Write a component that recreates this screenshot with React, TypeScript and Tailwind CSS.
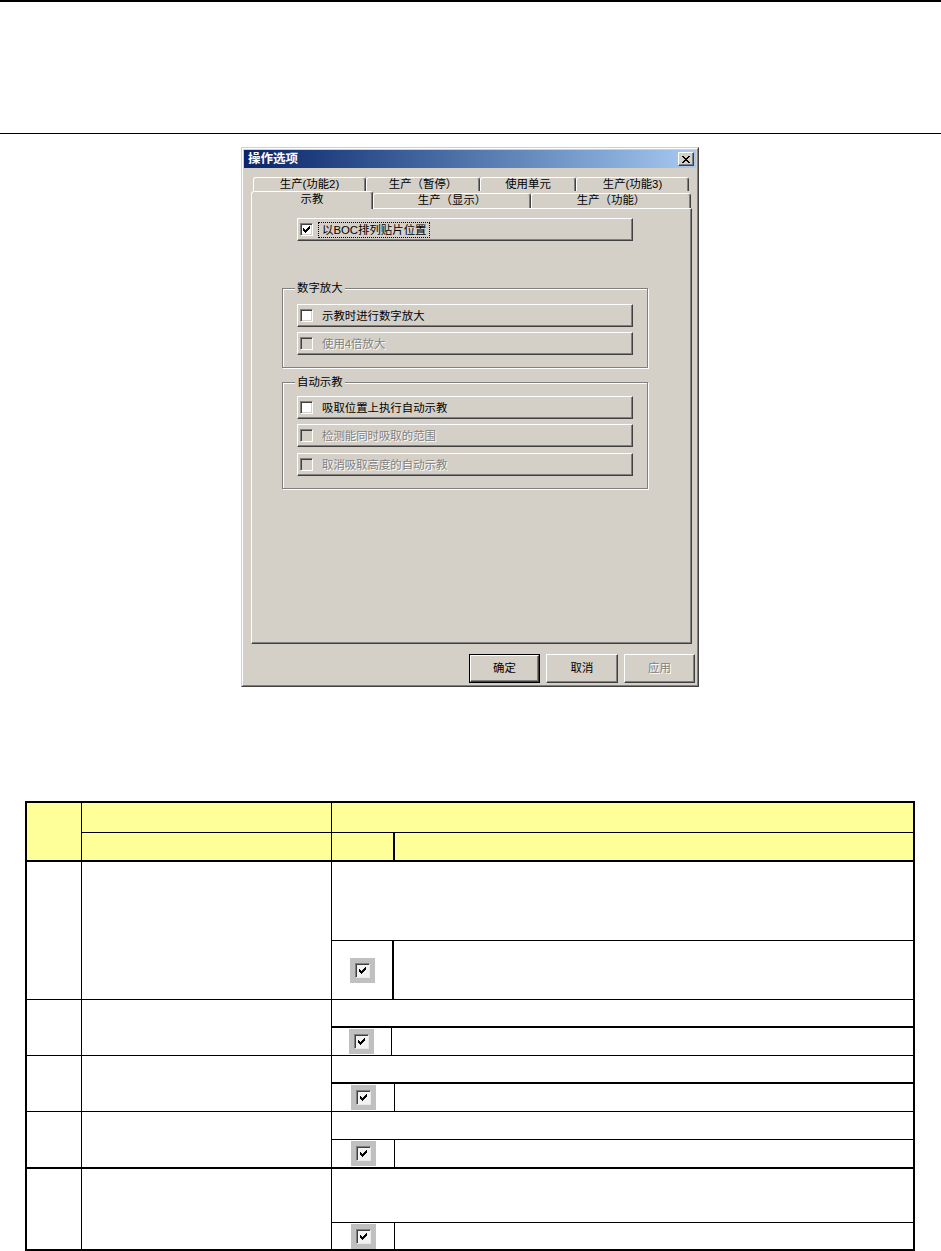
const FONT = "font-['Liberation_Sans','Noto_Sans_CJK_SC',sans-serif]";

const raised =
  "border border-t-white border-l-white border-r-[#404040] border-b-[#404040] shadow-[inset_-1px_-1px_0_#808080]";

function CheckMark() {
  const cols = [
    [0, 2],
    [1, 3],
    [2, 4],
    [3, 3],
    [4, 2],
    [5, 1],
    [6, 0],
  ];
  return (
    <svg width={7} height={7} viewBox="0 0 7 7" shapeRendering="crispEdges">
      {cols.map(([x, y]) => (
        <rect key={x} x={x} y={y} width={1} height={3} fill="#000" />
      ))}
    </svg>
  );
}

function CloseGlyph() {
  const rows = ["11000011", "01100110", "00111100", "00011000", "00111100", "01100110", "11000011"];
  return (
    <svg width={8} height={7} viewBox="0 0 8 7" shapeRendering="crispEdges">
      {rows.map((r, y) =>
        r.split("").map((c, x) => (c === "1" ? <rect key={`${x}-${y}`} x={x} y={y} width={1} height={1} fill="#000" /> : null))
      )}
    </svg>
  );
}

function CheckBox({ checked, disabled }: { checked?: boolean; disabled?: boolean }) {
  return (
    <span
      className={`flex h-[13px] w-[13px] shrink-0 items-center justify-center border border-t-[#808080] border-l-[#808080] border-r-white border-b-white shadow-[inset_1px_1px_0_#404040,inset_-1px_-1px_0_#d4d0c8] ${
        disabled ? "bg-[#d4d0c8]" : "bg-white"
      }`}
    >
      {checked && <CheckMark />}
    </span>
  );
}

function OptionRow({
  label,
  checked,
  disabled,
  focus,
  className,
}: {
  label: string;
  checked?: boolean;
  disabled?: boolean;
  focus?: boolean;
  className: string;
}) {
  return (
    <div className={`flex h-[23px] w-[336px] items-center bg-[#d4d0c8] pl-[2px] ${raised} ${className}`}>
      <CheckBox checked={checked} disabled={disabled} />
      {focus ? (
        <span className="ml-[5px] border border-dotted border-black px-[3px] text-[11.4px] leading-[14px] text-black">{label}</span>
      ) : (
        <span
          className={`ml-[9px] text-[11.4px] leading-[14px] ${
            disabled ? "text-[#808080] [text-shadow:1px_1px_0_#fff]" : "text-black"
          }`}
        >
          {label}
        </span>
      )}
    </div>
  );
}

function GroupBox({ title, className, children }: { title: string; className: string; children: React.ReactNode }) {
  return (
    <div
      className={`relative ml-[30px] w-[366px] border border-[#808080] shadow-[inset_1px_1px_0_#fff,1px_1px_0_#fff] ${className}`}
    >
      <span className="absolute -top-[8px] left-[12px] bg-[#d4d0c8] px-[2px] text-[11.4px] leading-[14px] text-black">{title}</span>
      <div className="flex flex-col pl-[14px]">{children}</div>
    </div>
  );
}

const tabBase =
  "flex items-center justify-center rounded-t-[3px] border-t border-l border-r border-t-white border-l-white border-r-[#404040] shadow-[inset_-1px_0_0_#808080] bg-[#d4d0c8] text-[11.4px] leading-none text-black";

function DialogButton({ label, isDefault, disabled, width }: { label: string; isDefault?: boolean; disabled?: boolean; width: string }) {
  const text = (
    <span className={`text-[11.4px] leading-none ${disabled ? "text-[#808080] [text-shadow:1px_1px_0_#fff]" : "text-black"}`}>{label}</span>
  );
  if (isDefault) {
    return (
      <div className={`flex h-[29px] border border-black ${width}`}>
        <div className={`flex flex-1 items-center justify-center ${raised}`}>{text}</div>
      </div>
    );
  }
  return <div className={`flex h-[29px] items-center justify-center ${raised} ${width}`}>{text}</div>;
}

function Dialog() {
  return (
    <div className="ml-[241px] mt-[13px] flex h-[540px] w-[458px] flex-col border border-t-[#d4d0c8] border-l-[#d4d0c8] border-r-[#404040] border-b-[#404040] bg-[#d4d0c8]">
      <div className="flex flex-1 flex-col border border-t-white border-l-white border-r-[#808080] border-b-[#808080] p-px">
        <div className="flex h-[18px] items-center justify-between bg-linear-to-r from-[#0a246a] to-[#a6caf0] pl-[4px] pr-[2px]">
          <span className="text-[12.5px] font-bold leading-none text-white">操作选项</span>
          <div className={`flex h-[14px] w-[16px] items-center justify-center bg-[#d4d0c8] ${raised}`}>
            <CloseGlyph />
          </div>
        </div>

        <div className="ml-[7px] mt-[9px] flex w-[441px] flex-col">
          <div className="ml-[2px] flex h-[14px]">
            <div className={`${tabBase} w-[113px]`}>生产(功能2)</div>
            <div className={`${tabBase} w-[114px]`}>生产（暂停）</div>
            <div className={`${tabBase} w-[96px]`}>使用单元</div>
            <div className={`${tabBase} w-[113px]`}>生产(功能3)</div>
          </div>
          <div className="flex h-[17px] items-end">
            <div className={`${tabBase} relative z-10 -mb-px h-[18px] w-[122px] items-start pt-[2px]`}>示教</div>
            <div className={`${tabBase} h-[15px] w-[158px]`}>生产（显示）</div>
            <div className={`${tabBase} h-[15px] w-[160px]`}>生产（功能）</div>
          </div>
          <div className="flex h-[436px] flex-col border border-t-white border-l-white border-r-[#404040] border-b-[#404040] shadow-[inset_-1px_-1px_0_#808080]">
            <OptionRow label="以BOC排列贴片位置" checked focus className="ml-[45px] mt-[9px]" />

            <GroupBox title="数字放大" className="mt-[47px] h-[80px]">
              <OptionRow label="示教时进行数字放大" className="mt-[15px]" />
              <OptionRow label="使用4倍放大" disabled className="mt-[5px]" />
            </GroupBox>

            <GroupBox title="自动示教" className="mt-[14px] h-[107px]">
              <OptionRow label="吸取位置上执行自动示教" className="mt-[13px]" />
              <OptionRow label="检测能同时吸取的范围" disabled className="mt-[5px]" />
              <OptionRow label="取消吸取高度的自动示教" disabled className="mt-[6px]" />
            </GroupBox>
          </div>
        </div>

        <div className="mt-[10px] flex justify-end gap-[6px] pr-px">
          <DialogButton label="确定" isDefault width="w-[71px]" />
          <DialogButton label="取消" width="w-[72px]" />
          <DialogButton label="应用" disabled width="w-[71px]" />
        </div>
      </div>
    </div>
  );
}

function TickIcon() {
  return (
    <div className="flex h-[25px] w-[25px] items-center justify-center bg-[#c0c0c0]">
      <span className="flex h-[15px] w-[15px] items-center justify-center border border-t-[#808080] border-l-[#808080] border-r-[#e8e8e8] border-b-[#e8e8e8] bg-[#f2f2f2] shadow-[inset_1px_1px_0_#404040]">
        <CheckMark />
      </span>
    </div>
  );
}

const rows = [
  { row: "h-[138px] border-b", upper: "h-[79px] border-b", icon: "w-[62px] border-r-2" },
  { row: "h-[56px] border-b", upper: "h-[28px] border-b-2", icon: "w-[60px] border-r" },
  { row: "h-[56px] border-b", upper: "h-[28px] border-b-2", icon: "w-[63px] border-r" },
  { row: "h-[57px] border-b-2", upper: "h-[28px] border-b", icon: "w-[63px] border-r" },
  { row: "h-[80px]", upper: "h-[54px] border-b", icon: "w-[63px] border-r" },
];

function SpecTable() {
  return (
    <div className="ml-[25px] mt-[114px] w-[890px] border-2 border-black">
      <div className="flex h-[59px] border-b-2 border-black bg-[#ffff99]">
        <div className="w-[55px] border-r border-black" />
        <div className="flex w-[250px] flex-col border-r border-black">
          <div className="h-[30px] border-b border-black" />
          <div className="flex-1" />
        </div>
        <div className="flex flex-1 flex-col">
          <div className="h-[30px] border-b border-black" />
          <div className="flex flex-1">
            <div className="w-[63px] border-r-2 border-black" />
            <div className="flex-1" />
          </div>
        </div>
      </div>

      {rows.map((r, i) => (
        <div key={i} className={`flex border-black ${r.row}`}>
          <div className="w-[55px] border-r border-black" />
          <div className="w-[250px] border-r border-black" />
          <div className="flex flex-1 flex-col">
            <div className={`border-black ${r.upper}`} />
            <div className="flex flex-1">
              <div className={`flex items-center justify-center border-black ${r.icon}`}>
                <TickIcon />
              </div>
              <div className="flex-1" />
            </div>
          </div>
        </div>
      ))}
    </div>
  );
}

export default function App() {
  return (
    <div className={`h-[1251px] w-[941px] overflow-hidden bg-white ${FONT}`}>
      <div className="h-[2px] bg-black" />
      <div className="mt-[131px] h-px bg-black" />
      <Dialog />
      <SpecTable />
    </div>
  );
}
